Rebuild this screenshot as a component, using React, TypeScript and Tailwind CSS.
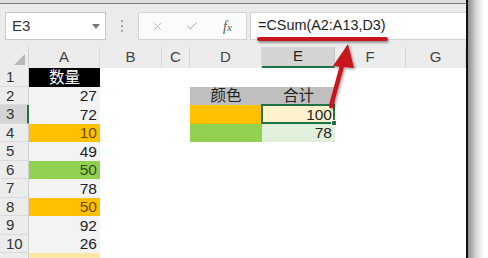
import { X, Check } from "lucide-react";

const cols = [
  { key: "A", w: "w-[71px]" },
  { key: "B", w: "w-[62px]" },
  { key: "C", w: "w-[28px]" },
  { key: "D", w: "w-[72px]" },
  { key: "E", w: "w-[73px]" },
  { key: "F", w: "w-[71px]" },
  { key: "G", w: "w-[60px]" },
];

type Cell = { text?: string; bg?: string; color?: string; align?: string };

const rows: { n: number; label: string; h: string; cells: Record<string, Cell> }[] = [
  { n: 1, label: "1", h: "h-[19px]", cells: { A: { text: "数量", bg: "bg-black", color: "text-white", align: "justify-center" } } },
  { n: 2, label: "2", h: "h-[18px]", cells: { A: { text: "27" }, D: { text: "颜色", bg: "bg-[#bfbfbf]", align: "justify-center" }, E: { text: "合计", bg: "bg-[#bfbfbf]", align: "justify-center" } } },
  { n: 3, label: "3", h: "h-[19px]", cells: { A: { text: "72" }, D: { bg: "bg-[#ffc000]" }, E: { text: "100", bg: "bg-[#fff2cc]" } } },
  { n: 4, label: "4", h: "h-[18px]", cells: { A: { text: "10", bg: "bg-[#ffc000]", color: "text-[#6b4a00]" }, D: { bg: "bg-[#92d050]" }, E: { text: "78", bg: "bg-[#e2efda]" } } },
  { n: 5, label: "5", h: "h-[19px]", cells: { A: { text: "49" } } },
  { n: 6, label: "6", h: "h-[18px]", cells: { A: { text: "50", bg: "bg-[#92d050]", color: "text-[#2f4f17]" } } },
  { n: 7, label: "7", h: "h-[19px]", cells: { A: { text: "78" } } },
  { n: 8, label: "8", h: "h-[18px]", cells: { A: { text: "50", bg: "bg-[#ffc000]", color: "text-[#6b4a00]" } } },
  { n: 9, label: "9", h: "h-[19px]", cells: { A: { text: "92" } } },
  { n: 10, label: "10", h: "h-[18px]", cells: { A: { text: "26" } } },
  { n: 11, label: "", h: "h-[18px]", cells: { A: { bg: "bg-[#fde7a6]" } } },
];

export default function App() {
  return (
    <div
      className="relative flex h-[258px] w-[488px] items-start overflow-hidden bg-white text-[#222]"
      style={{ fontFamily: '"Liberation Sans", "Noto Sans CJK SC", sans-serif' }}
    >
      {/* excel window */}
      <div className="flex h-[258px] w-[468px] shrink-0 flex-col overflow-hidden border-r-2 border-[#111]">
        <div className="h-[3px] shrink-0 bg-[#dedede]" />
        <div className="h-px shrink-0 bg-[#7a7a7a]" />

        {/* formula bar */}
        <div className="flex h-[43px] shrink-0 items-start bg-[#ebebeb] pt-[8px]">
          <div className="ml-[5px] flex h-[28px] w-[101px] items-center justify-between border border-[#c9c9c9] bg-white pl-[6px] pr-[5px]">
            <span className="text-[15px] text-[#333]">E3</span>
            <span className="h-0 w-0 border-x-[4px] border-t-[5px] border-x-transparent border-t-[#777]" />
          </div>
          <div className="flex h-[28px] w-[32px] flex-col items-center justify-center gap-[3px]">
            <span className="h-[2px] w-[2px] bg-[#a5a5a5]" />
            <span className="h-[2px] w-[2px] bg-[#a5a5a5]" />
            <span className="h-[2px] w-[2px] bg-[#a5a5a5]" />
          </div>
          <div className="flex h-[28px] w-[109px] items-center border border-[#d3d3d3] bg-[#fbfbfb]">
            <X className="ml-[12px] h-[13px] w-[13px] text-[#b5b5b5]" strokeWidth={1.6} />
            <Check className="ml-[21px] h-[14px] w-[14px] text-[#b5b5b5]" strokeWidth={1.8} />
            <span className="ml-[24px] text-[14px] italic text-[#555]" style={{ fontFamily: '"Liberation Serif", serif' }}>
              f<span className="text-[11px]">x</span>
            </span>
          </div>
          <div className="ml-[3px] flex h-[28px] flex-1 items-center border border-r-0 border-[#d3d3d3] bg-white pl-[7px]">
            <span className="text-[14.4px] text-[#222]">=CSum(A2:A13,D3)</span>
          </div>
        </div>

        {/* column headers */}
        <div className="flex h-[21px] shrink-0 bg-[#ececec]">
          <div className="relative w-[29px] border-r border-[#cfcfcf]">
            <span className="absolute bottom-[3px] right-[3px] h-0 w-0 border-b-[11px] border-l-[11px] border-b-[#b8b8b8] border-l-transparent" />
          </div>
          {cols.map((c) => (
            <div
              key={c.key}
              className={`${c.w} flex items-center justify-center border-r text-[15px] ${
                c.key === "E"
                  ? "border-[#c4c4c4] border-b-2 border-b-[#217346] bg-[#d4d4d4] text-[#222]"
                  : "border-[#d9d9d9] text-[#444]"
              }`}
            >
              {c.key}
            </div>
          ))}
        </div>

        {/* grid */}
        <div className="relative flex shrink-0 flex-col">
          {rows.map((r) => (
            <div key={r.n} className={`${r.h} flex shrink-0`}>
              <div
                className={`w-[29px] border-b border-[#dadada] pl-[6px] text-[15px] leading-[18px] ${
                  r.n === 3 ? "border-r-2 border-r-[#217346] bg-[#d4d4d4] text-[#333]" : "border-r border-r-[#cfcfcf] bg-[#ececec] text-[#333]"
                }`}
              >
                {r.label}
              </div>
              {cols.map((c) => {
                const cell = r.cells[c.key];
                const baseBg = c.key === "A" ? "bg-[#f3f3f3]" : "bg-white";
                return (
                  <div
                    key={c.key}
                    className={`${c.w} flex items-center ${cell?.align ?? "justify-end pr-[3px]"} ${cell?.bg ?? baseBg} ${
                      cell?.color ?? "text-[#222]"
                    } text-[15.5px]`}
                  >
                    {cell?.text}
                  </div>
                );
              })}
            </div>
          ))}

          {/* selection E3 */}
          <div className="pointer-events-none absolute left-[261px] top-[36px] h-[20px] w-[74px] border-2 border-[#217346]" />
          <div className="pointer-events-none absolute left-[331px] top-[52px] h-[6px] w-[6px] border border-white bg-[#217346]" />
        </div>
      </div>

      {/* window shadow */}
      <div className="h-full w-[16px] bg-gradient-to-r from-[#8d8d8d] via-[#d6d6d6] to-white" />

      {/* red annotation */}
      <div className="absolute left-[257px] top-[37px] h-[4px] w-[131px] rounded-full bg-[#c8161d] shadow-[1px_2px_2px_rgba(0,0,0,0.35)]" />
      <svg className="absolute left-0 top-0" width="488" height="258" viewBox="0 0 488 258">
        <defs>
          <filter id="sh" x="-20%" y="-20%" width="140%" height="140%">
            <feDropShadow dx="1.5" dy="1.5" stdDeviation="1.2" floodColor="#000" floodOpacity="0.35" />
          </filter>
        </defs>
        <g filter="url(#sh)">
          <line x1="331" y1="106" x2="343" y2="62" stroke="#c8161d" strokeWidth="4.5" strokeLinecap="round" />
          <polygon points="348,44 333,66 354,68" fill="#c8161d" />
        </g>
      </svg>
    </div>
  );
}
